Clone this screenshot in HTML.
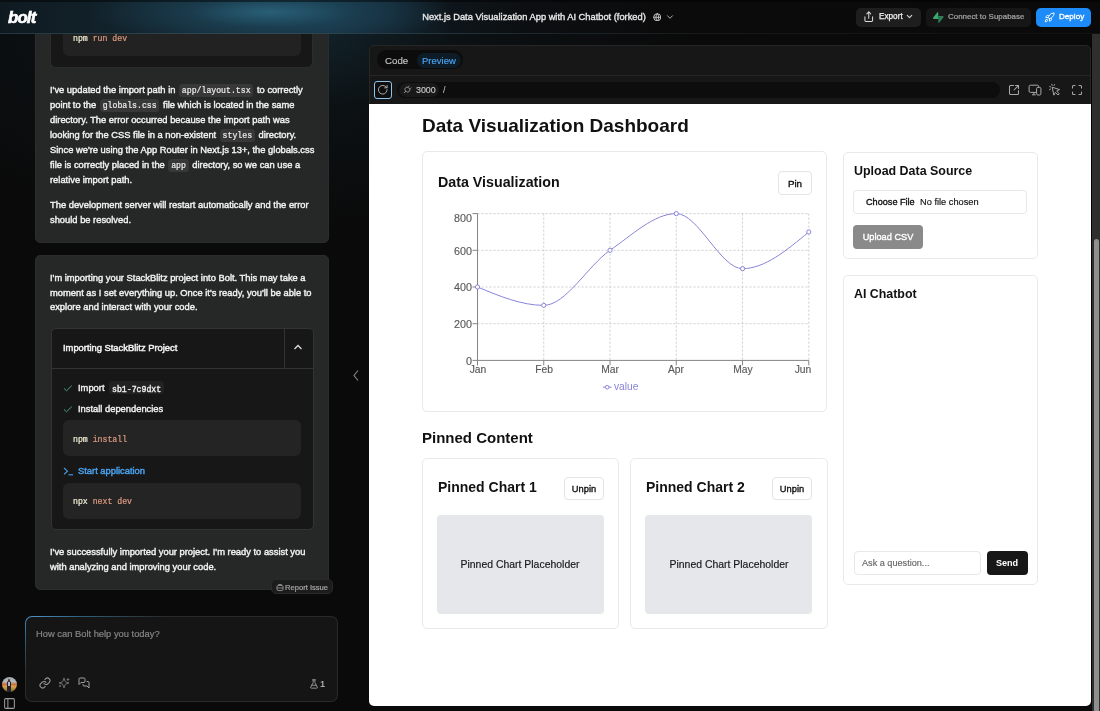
<!DOCTYPE html>
<html><head><meta charset="utf-8">
<style>
*{box-sizing:border-box;margin:0;padding:0}
html,body{width:1100px;height:711px;overflow:hidden;background:#0b0b0b;font-family:"Liberation Sans",sans-serif;position:relative}
.t{position:absolute;white-space:nowrap;will-change:transform}
.r{position:absolute}
.c{font-family:"Liberation Mono",monospace;font-size:8.2px;background:#383838;border-radius:3.5px;padding:2.3px 2.8px;color:#ececec;margin:0 1px;-webkit-text-stroke:0.2px currentColor}
</style></head><body>
<div class="r" style="left:0.00px;top:0.00px;width:1100.00px;height:711.00px;background:#0a0a0a"></div>
<div class="r" style="left:0.00px;top:0.00px;width:1100.00px;height:711.00px;background:radial-gradient(ellipse 420px 210px at 270px 20px, rgba(34,82,105,0.42) 0%, rgba(20,48,62,0.18) 45%, rgba(10,10,10,0) 100%)"></div>
<div class="r" style="left:35.00px;top:-20.00px;width:294.00px;height:262.50px;background:#262727;border:1px solid #2b2c2c;border-radius:5px"></div>
<div class="r" style="left:50.00px;top:-20.00px;width:263.00px;height:88.00px;background:#171717;border:1px solid #2c2c2c;border-radius:6px"></div>
<div class="r" style="left:63.00px;top:-20.00px;width:238.00px;height:75.50px;background:#222;border-radius:6px"></div>
<div class="t" style="left:73.30px;top:33.99px;font-size:8.2px;line-height:9.84px;color:#f0eed2;font-weight:normal;font-family:'Liberation Mono',monospace;-webkit-text-stroke:0.2px currentColor;">npm <span style="color:#dc9a80">run dev</span></div>
<div class="t" style="left:50.00px;top:84.75px;font-size:9.35px;line-height:11.22px;color:#f2f2f2;font-weight:normal;font-family:'Liberation Sans',sans-serif;-webkit-text-stroke:0.4px currentColor;">I've updated the import path in <span class="c">app/layout.tsx</span> to correctly</div>
<div class="t" style="left:50.00px;top:99.75px;font-size:9.35px;line-height:11.22px;color:#f2f2f2;font-weight:normal;font-family:'Liberation Sans',sans-serif;-webkit-text-stroke:0.4px currentColor;">point to the <span class="c">globals.css</span> file which is located in the same</div>
<div class="t" style="left:50.00px;top:114.75px;font-size:9.35px;line-height:11.22px;color:#f2f2f2;font-weight:normal;font-family:'Liberation Sans',sans-serif;-webkit-text-stroke:0.4px currentColor;">directory. The error occurred because the import path was</div>
<div class="t" style="left:50.00px;top:129.75px;font-size:9.35px;line-height:11.22px;color:#f2f2f2;font-weight:normal;font-family:'Liberation Sans',sans-serif;-webkit-text-stroke:0.4px currentColor;">looking for the CSS file in a non-existent <span class="c">styles</span> directory.</div>
<div class="t" style="left:50.00px;top:144.75px;font-size:9.35px;line-height:11.22px;color:#f2f2f2;font-weight:normal;font-family:'Liberation Sans',sans-serif;-webkit-text-stroke:0.4px currentColor;">Since we're using the App Router in Next.js 13+, the globals.css</div>
<div class="t" style="left:50.00px;top:159.75px;font-size:9.35px;line-height:11.22px;color:#f2f2f2;font-weight:normal;font-family:'Liberation Sans',sans-serif;-webkit-text-stroke:0.4px currentColor;">file is correctly placed in the <span class="c">app</span> directory, so we can use a</div>
<div class="t" style="left:50.00px;top:174.75px;font-size:9.35px;line-height:11.22px;color:#f2f2f2;font-weight:normal;font-family:'Liberation Sans',sans-serif;-webkit-text-stroke:0.4px currentColor;">relative import path.</div>
<div class="t" style="left:50.00px;top:200.15px;font-size:9.35px;line-height:11.22px;color:#f2f2f2;font-weight:normal;font-family:'Liberation Sans',sans-serif;-webkit-text-stroke:0.4px currentColor;">The development server will restart automatically and the error</div>
<div class="t" style="left:50.00px;top:215.15px;font-size:9.35px;line-height:11.22px;color:#f2f2f2;font-weight:normal;font-family:'Liberation Sans',sans-serif;-webkit-text-stroke:0.4px currentColor;">should be resolved.</div>
<div class="r" style="left:35.00px;top:254.70px;width:294.00px;height:335.00px;background:#262727;border:1px solid #2b2c2c;border-radius:5px"></div>
<div class="t" style="left:50.00px;top:272.55px;font-size:9.35px;line-height:11.22px;color:#f2f2f2;font-weight:normal;font-family:'Liberation Sans',sans-serif;-webkit-text-stroke:0.4px currentColor;">I'm importing your StackBlitz project into Bolt. This may take a</div>
<div class="t" style="left:50.00px;top:287.55px;font-size:9.35px;line-height:11.22px;color:#f2f2f2;font-weight:normal;font-family:'Liberation Sans',sans-serif;-webkit-text-stroke:0.4px currentColor;">moment as I set everything up. Once it's ready, you'll be able to</div>
<div class="t" style="left:50.00px;top:302.45px;font-size:9.35px;line-height:11.22px;color:#f2f2f2;font-weight:normal;font-family:'Liberation Sans',sans-serif;-webkit-text-stroke:0.4px currentColor;">explore and interact with your code.</div>
<div class="r" style="left:50.50px;top:328.40px;width:263.00px;height:202.10px;background:#171717;border:1px solid #333;border-radius:5px"></div>
<div class="r" style="left:51.50px;top:368.00px;width:261.00px;height:1.00px;background:#333"></div>
<div class="r" style="left:284.20px;top:329.40px;width:1.00px;height:38.60px;background:#333"></div>
<div class="t" style="left:63.00px;top:342.75px;font-size:9.35px;line-height:11.22px;color:#f4f4f4;font-weight:normal;font-family:'Liberation Sans',sans-serif;-webkit-text-stroke:0.45px currentColor;">Importing StackBlitz Project</div>
<svg class="r" style="left:293px;top:343px;" width="10" height="8" viewBox="0 0 10 8"><path d="M1.5 6 L5 2.5 L8.5 6" fill="none" stroke="#ddd" stroke-width="1.3"/></svg>
<svg class="r" style="left:63px;top:384px;" width="10" height="8" viewBox="0 0 10 8"><path d="M1 4.4 L3.5 6.8 L8.8 1.6" fill="none" stroke="#46a07a" stroke-width="1"/></svg>
<svg class="r" style="left:63px;top:405px;" width="10" height="8" viewBox="0 0 10 8"><path d="M1 4.4 L3.5 6.8 L8.8 1.6" fill="none" stroke="#46a07a" stroke-width="1"/></svg>
<div class="t" style="left:77.50px;top:382.95px;font-size:9.35px;line-height:11.22px;color:#f0f0f0;font-weight:normal;font-family:'Liberation Sans',sans-serif;-webkit-text-stroke:0.4px currentColor;">Import</div>
<div class="r" style="left:108.70px;top:381.30px;width:55.80px;height:13.20px;background:#222;border-radius:3px"></div>
<div class="t" style="left:112.30px;top:384.69px;font-size:8.2px;line-height:9.84px;color:#eeeeee;font-weight:normal;font-family:'Liberation Mono',monospace;-webkit-text-stroke:0.4px currentColor;">sb1-7c9dxt</div>
<div class="t" style="left:77.50px;top:404.25px;font-size:9.35px;line-height:11.22px;color:#f0f0f0;font-weight:normal;font-family:'Liberation Sans',sans-serif;-webkit-text-stroke:0.4px currentColor;">Install dependencies</div>
<div class="r" style="left:63.00px;top:420.00px;width:237.80px;height:36.20px;background:#242424;border-radius:6px"></div>
<div class="t" style="left:73.30px;top:434.69px;font-size:8.2px;line-height:9.84px;color:#f0eed2;font-weight:normal;font-family:'Liberation Mono',monospace;-webkit-text-stroke:0.2px currentColor;">npm <span style="color:#dc9a80">install</span></div>
<svg class="r" style="left:63px;top:467px;" width="11" height="9" viewBox="0 0 11 9"><path d="M1 1 L4.5 4.2 L1 7.4" fill="none" stroke="#4aa0e8" stroke-width="1.1"/><path d="M5.5 7.8 H10" stroke="#4aa0e8" stroke-width="1.1"/></svg>
<div class="t" style="left:78.00px;top:466.25px;font-size:9.35px;line-height:11.22px;color:#4aa3ef;font-weight:normal;font-family:'Liberation Sans',sans-serif;-webkit-text-stroke:0.4px currentColor;">Start application</div>
<div class="r" style="left:63.00px;top:482.50px;width:237.80px;height:36.20px;background:#242424;border-radius:6px"></div>
<div class="t" style="left:73.30px;top:497.19px;font-size:8.2px;line-height:9.84px;color:#f0eed2;font-weight:normal;font-family:'Liberation Mono',monospace;-webkit-text-stroke:0.2px currentColor;">npx <span style="color:#dc9a80">next dev</span></div>
<div class="t" style="left:50.00px;top:547.05px;font-size:9.35px;line-height:11.22px;color:#f2f2f2;font-weight:normal;font-family:'Liberation Sans',sans-serif;-webkit-text-stroke:0.4px currentColor;">I've successfully imported your project. I'm ready to assist you</div>
<div class="t" style="left:50.00px;top:561.95px;font-size:9.35px;line-height:11.22px;color:#f2f2f2;font-weight:normal;font-family:'Liberation Sans',sans-serif;-webkit-text-stroke:0.4px currentColor;">with analyzing and improving your code.</div>
<div class="r" style="left:271.00px;top:579.00px;width:62.00px;height:15.00px;background:#1c1c1c;border:1px solid #2a2a2a;border-radius:5px"></div>
<svg class="r" style="left:276px;top:583px;" width="8" height="8" viewBox="0 0 8 8"><rect x="1" y="2.5" width="6" height="5" rx="1.2" fill="none" stroke="#999" stroke-width="0.9"/><path d="M2.5 2.5 V1.5 H5.5 V2.5 M1 5 H7" fill="none" stroke="#999" stroke-width="0.8"/></svg>
<div class="t" style="left:285.00px;top:583.41px;font-size:7.6px;line-height:9.12px;color:#a8a8a8;font-weight:normal;font-family:'Liberation Sans',sans-serif;-webkit-text-stroke:0.2px currentColor;">Report Issue</div>
<div class="r" style="left:25.00px;top:616.40px;width:313.00px;height:85.60px;background:radial-gradient(ellipse 130px 60px at 8px 0px, #4a90c4 0%, #30607f 35%, #2a2a2a 100%);border-radius:7px"></div>
<div class="r" style="left:26.00px;top:617.40px;width:311.00px;height:83.60px;background:#151515;border-radius:6px"></div>
<div class="t" style="left:35.60px;top:629.15px;font-size:9.35px;line-height:11.22px;color:#858585;font-weight:normal;font-family:'Liberation Sans',sans-serif;-webkit-text-stroke:0.2px currentColor;">How can Bolt help you today?</div>
<svg class="r" style="left:38.5px;top:677px;" width="12" height="12" viewBox="0 0 24 24" fill="none" stroke="#9a9a9a" stroke-width="2.1" stroke-linecap="round" stroke-linejoin="round"><path d="M10 13a5 5 0 0 0 7.54.54l3-3a5 5 0 0 0-7.07-7.07l-1.72 1.71"/><path d="M14 11a5 5 0 0 0-7.54-.54l-3 3a5 5 0 0 0 7.07 7.07l1.71-1.71"/></svg>
<svg class="r" style="left:57.5px;top:677px;" width="12" height="12" viewBox="0 0 24 24" fill="none" stroke="#707070" stroke-width="2.0" stroke-linecap="round" stroke-linejoin="round"><path d="M9.937 15.5A2 2 0 0 0 8.5 14.063l-6.135-1.582a.5.5 0 0 1 0-.962L8.5 9.936A2 2 0 0 0 9.937 8.5l1.582-6.135a.5.5 0 0 1 .963 0L14.063 8.5A2 2 0 0 0 15.5 9.937l6.135 1.581a.5.5 0 0 1 0 .964L15.5 14.063a2 2 0 0 0-1.437 1.437l-1.582 6.135a.5.5 0 0 1-.963 0z"/><path d="M20 3v4"/><path d="M22 5h-4"/><path d="M4 17v2"/><path d="M5 18H3"/></svg>
<svg class="r" style="left:78px;top:677px;" width="12" height="12" viewBox="0 0 24 24" fill="none" stroke="#a0a0a0" stroke-width="2.0" stroke-linecap="round" stroke-linejoin="round"><path d="M14 9a2 2 0 0 1-2 2H6l-4 4V4a2 2 0 0 1 2-2h8a2 2 0 0 1 2 2z"/><path d="M18 9h2a2 2 0 0 1 2 2v11l-4-4h-6a2 2 0 0 1-2-2v-1"/></svg>
<svg class="r" style="left:309px;top:678.5px;" width="10" height="10" viewBox="0 0 24 24" fill="none" stroke="#999" stroke-width="2.2" stroke-linecap="round" stroke-linejoin="round"><path d="M14 2v6a2 2 0 0 0 .245.96l5.51 10.08A2 2 0 0 1 18 22H6a2 2 0 0 1-1.755-2.96l5.51-10.08A2 2 0 0 0 10 8V2"/><path d="M6.453 15h11.094"/><path d="M8.5 2h7"/></svg>
<div class="t" style="left:319.50px;top:679.25px;font-size:9.35px;line-height:11.22px;color:#bbbbbb;font-weight:normal;font-family:'Liberation Sans',sans-serif;-webkit-text-stroke:0.2px currentColor;">1</div>
<div class="r" style="left:1.5px;top:676.5px;width:15px;height:15px;border-radius:50%;overflow:hidden;background:linear-gradient(180deg,#9aa4ac 0%,#b8bcbe 30%,#c8703a 50%,#e0a050 62%,#b88a40 78%,#6a5a3a 100%);"><div style="position:absolute;left:5.5px;top:4.5px;width:4px;height:11px;background:#20222c;border-radius:1.5px 1.5px 0 0"></div><div style="position:absolute;left:6.6px;top:5.5px;width:1.8px;height:4px;background:#a8b8d8"></div><div style="position:absolute;left:6.2px;top:2.6px;width:2.6px;height:2.6px;background:#4a3a30;border-radius:50%"></div></div>
<svg class="r" style="left:2.5px;top:697px;" width="13" height="13" viewBox="0 0 24 24" fill="none" stroke="#9a9a9a" stroke-width="1.9" stroke-linecap="round" stroke-linejoin="round"><path d="M9 3v18"/><rect width="18" height="18" x="3" y="3" rx="2"/></svg>
<svg class="r" style="left:352px;top:369px;" width="8" height="13" viewBox="0 0 8 13"><path d="M6 1.5 L2 6.5 L6 11.5" fill="none" stroke="#888" stroke-width="1.1"/></svg>
<div class="r" style="left:0.00px;top:0.00px;width:1100.00px;height:33.00px;background:radial-gradient(ellipse 180px 34px at 270px 12px, rgba(44,104,130,0.85) 0%, rgba(32,78,100,0.5) 45%, rgba(20,40,52,0) 100%), linear-gradient(90deg,#0f1a20 0%,#142833 18%,#173141 30%,#132632 36%,#0e151a 41%,#0c0f11 48%,#0b0b0c 60%,#0a0a0a 100%)"></div>
<div class="r" style="left:0.00px;top:0.00px;width:1100.00px;height:1.50px;background:rgba(0,0,0,0.45)"></div>
<div class="r" style="left:0.00px;top:33.00px;width:1100.00px;height:1.00px;background:linear-gradient(90deg,#25353d,#2f4a57 25%,#1c262b 50%,#161616 70%,#121212)"></div>
<div class="t" style="left:7.60px;top:8.06px;font-size:16px;line-height:19.20px;color:#ffffff;font-weight:bold;font-family:'Liberation Sans',sans-serif;font-style:italic;letter-spacing:-0.8px;transform:scaleX(1.05);transform-origin:left;-webkit-text-stroke:0.6px #fff;">bolt</div>
<div class="t" style="left:233.50px;width:600px;text-align:center;top:12.30px;font-size:9.3px;line-height:11.16px;color:#e8e8e8;font-weight:normal;font-family:'Liberation Sans',sans-serif;-webkit-text-stroke:0.35px currentColor;">Next.js Data Visualization App with AI Chatbot (forked)</div>
<svg class="r" style="left:652.8px;top:12.8px;" width="8.6" height="8.6" viewBox="0 0 24 24" fill="none" stroke="#c8c8c8" stroke-width="2.6" stroke-linecap="round" stroke-linejoin="round"><circle cx="12" cy="12" r="10"/><path d="M12 2a14.5 14.5 0 0 0 0 20 14.5 14.5 0 0 0 0-20"/><path d="M2 12h20"/></svg>
<svg class="r" style="left:665px;top:12px;" width="10" height="10" viewBox="0 0 24 24" fill="none" stroke="#bbb" stroke-width="2.2" stroke-linecap="round" stroke-linejoin="round"><path d="m6 9 6 6 6-6"/></svg>
<div class="r" style="left:856.00px;top:8.00px;width:65.00px;height:18.60px;background:#1e1e1e;border-radius:5px"></div>
<svg class="r" style="left:862.5px;top:11px;" width="11.5" height="11.5" viewBox="0 0 24 24" fill="none" stroke="#ddd" stroke-width="2.1" stroke-linecap="round" stroke-linejoin="round"><path d="M4 12v8a2 2 0 0 0 2 2h12a2 2 0 0 0 2-2v-8"/><path d="M16 6 12 2 8 6"/><path d="M12 2v13"/></svg>
<div class="t" style="left:879.00px;top:12.24px;font-size:8.2px;line-height:9.84px;color:#f0f0f0;font-weight:normal;font-family:'Liberation Sans',sans-serif;-webkit-text-stroke:0.25px currentColor;">Export</div>
<svg class="r" style="left:904.5px;top:12.3px;" width="9" height="9" viewBox="0 0 24 24" fill="none" stroke="#ddd" stroke-width="2.8" stroke-linecap="round" stroke-linejoin="round"><path d="m6 9 6 6 6-6"/></svg>
<div class="r" style="left:926.00px;top:8.00px;width:104.70px;height:18.60px;background:#161616;border-radius:5px"></div>
<svg class="r" style="left:933px;top:11.5px" width="11" height="11" viewBox="0 0 24 24"><path d="M13.53 23.42C12.92 24.19 11.69 23.77 11.68 22.79L11.45 8.51H21.06C22.8 8.51 23.77 10.52 22.69 11.88Z" fill="#2a7d55"/><path d="M9.63 .44C10.24 -.33 11.47 .09 11.48 1.07L11.57 15.35H2.09C.35 15.35 -.62 13.34 .46 11.98Z" fill="#3da673"/></svg>
<div class="t" style="left:947.70px;top:12.38px;font-size:7.95px;line-height:9.54px;color:#a8a8a8;font-weight:normal;font-family:'Liberation Sans',sans-serif;-webkit-text-stroke:0.2px currentColor;">Connect to Supabase</div>
<div class="r" style="left:1036.00px;top:8.00px;width:55.40px;height:18.60px;background:#1d8cf8;border-radius:5px"></div>
<svg class="r" style="left:1043.5px;top:11.5px;" width="11" height="11" viewBox="0 0 24 24" fill="none" stroke="#fff" stroke-width="2.0" stroke-linecap="round" stroke-linejoin="round"><path d="M4.5 16.5c-1.5 1.26-2 5-2 5s3.74-.5 5-2c.71-.84.7-2.13-.09-2.91a2.18 2.18 0 0 0-2.91-.09z"/><path d="m12 15-3-3a22 22 0 0 1 2-3.95A12.88 12.88 0 0 1 22 2c0 2.72-.78 7.5-6 11a22.35 22.35 0 0 1-4 2z"/><path d="M9 12H4s.55-3.03 2-4c1.62-1.08 5 0 5 0"/><path d="M12 15v5s3.03-.55 4-2c1.08-1.62 0-5 0-5"/></svg>
<div class="t" style="left:1059.00px;top:12.33px;font-size:8.1px;line-height:9.72px;color:#ffffff;font-weight:normal;font-family:'Liberation Sans',sans-serif;-webkit-text-stroke:0.3px currentColor;">Deploy</div>
<div class="r" style="left:369.00px;top:44.60px;width:722.00px;height:661.40px;background:#171717;border:1px solid #262626;border-radius:5px;"></div>
<div class="r" style="left:370.00px;top:74.50px;width:720.00px;height:1.00px;background:#262626"></div>
<div class="r" style="left:377.00px;top:50.20px;width:86.00px;height:19.20px;background:#0c0c0c;border-radius:10px"></div>
<div class="r" style="left:416.50px;top:53.00px;width:44.50px;height:14.50px;background:#0e1c27;border-radius:8px"></div>
<div class="t" style="left:385.30px;top:54.72px;font-size:9.7px;line-height:11.64px;color:#c4c4c4;font-weight:normal;font-family:'Liberation Sans',sans-serif;-webkit-text-stroke:0.15px currentColor;">Code</div>
<div class="t" style="left:422.30px;top:54.91px;font-size:9.5px;line-height:11.40px;color:#4aa3f0;font-weight:normal;font-family:'Liberation Sans',sans-serif;-webkit-text-stroke:0.15px currentColor;">Preview</div>
<div class="r" style="left:373.50px;top:80.60px;width:18.50px;height:18.20px;background:#0e0e0e;border:1.2px solid #8cc4ee;border-radius:3px"></div>
<svg class="r" style="left:377px;top:83.5px;" width="11.5" height="11.5" viewBox="0 0 24 24" fill="none" stroke="#b8b8b8" stroke-width="1.9" stroke-linecap="round" stroke-linejoin="round"><path d="M21 12a9 9 0 1 1-9-9c2.52 0 4.93 1 6.74 2.74L21 8"/><path d="M21 3v5h-5"/></svg>
<div class="r" style="left:397.00px;top:81.70px;width:603.00px;height:16.80px;background:#0d0d0d;border-radius:8px"></div>
<div class="r" style="left:398.50px;top:83.00px;width:40.50px;height:14.30px;background:#191919;border-radius:7px"></div>
<svg class="r" style="left:402px;top:84px;" width="11" height="11" viewBox="0 0 11 11"><g transform="rotate(45 5.5 5.5)"><rect x="3" y="3.6" width="5" height="4" rx="1.6" fill="none" stroke="#9a9a9a" stroke-width="0.9"/><path d="M4.3 3.6 V1.6 M6.7 3.6 V1.6 M5.5 7.6 V10.5" stroke="#9a9a9a" stroke-width="0.9"/></g></svg>
<div class="t" style="left:415.80px;top:85.08px;font-size:8.9px;line-height:10.68px;color:#c8c8c8;font-weight:normal;font-family:'Liberation Sans',sans-serif;-webkit-text-stroke:0.15px currentColor;">3000</div>
<div class="t" style="left:443.00px;top:85.28px;font-size:9px;line-height:10.80px;color:#c8c8c8;font-weight:normal;font-family:'Liberation Sans',sans-serif;">/</div>
<svg class="r" style="left:1007.5px;top:83.5px;" width="12" height="12" viewBox="0 0 24 24" fill="none" stroke="#a8a8a8" stroke-width="2.1" stroke-linecap="round" stroke-linejoin="round"><path d="M21 13v6a2 2 0 0 1-2 2H5a2 2 0 0 1-2-2V5a2 2 0 0 1 2-2h6"/><path d="m21 3-9 9"/><path d="M15 3h6v6"/></svg>
<svg class="r" style="left:1028px;top:84px;" width="14" height="12" viewBox="0 0 14 12"><rect x="1.1" y="1.2" width="9.6" height="7.2" rx="1.3" fill="none" stroke="#a8a8a8" stroke-width="1"/><path d="M5.9 8.4 V10.6 M4 10.8 H7.6" stroke="#a8a8a8" stroke-width="1"/><rect x="8.6" y="3.4" width="4.3" height="7.6" rx="1.2" fill="#171717" stroke="#a8a8a8" stroke-width="1"/></svg>
<svg class="r" style="left:1048px;top:83px;" width="14" height="13" viewBox="0 0 14 13"><path d="M4.2 4.2 L5.9 12.2 L7.4 9.4 L10 12 L11.3 10.7 L8.7 8.1 L11.6 6.6 Z" fill="none" stroke="#a8a8a8" stroke-width="1" stroke-linejoin="round"/><path d="M1.6 3.6 L2.8 4 M3.8 1.2 L4.1 2.5 M6.6 1.4 L6 2.5 M1.4 6.7 L2.6 6" stroke="#a8a8a8" stroke-width="0.9" stroke-linecap="round"/></svg>
<svg class="r" style="left:1071px;top:84px;" width="12" height="12" viewBox="0 0 24 24" fill="none" stroke="#a8a8a8" stroke-width="2.1" stroke-linecap="round" stroke-linejoin="round"><path d="M8 3H5a2 2 0 0 0-2 2v3"/><path d="M21 8V5a2 2 0 0 0-2-2h-3"/><path d="M3 16v3a2 2 0 0 0 2 2h3"/><path d="M16 21h3a2 2 0 0 0 2-2v-3"/></svg>
<div class="r" style="left:369.00px;top:103.70px;width:722.00px;height:602.30px;background:#ffffff;border-radius:0 0 5px 5px"></div>
<div class="r" style="left:1091.00px;top:34.00px;width:1.00px;height:677.00px;background:#050505"></div>
<div class="r" style="left:1092.00px;top:34.00px;width:8.00px;height:677.00px;background:#2f2f2f"></div>
<div class="r" style="left:1093.70px;top:239.40px;width:5.70px;height:480.60px;background:#8f8f8f;border-radius:3px"></div>
<div class="t" style="left:421.80px;top:114.92px;font-size:19px;line-height:22.80px;color:#111111;font-weight:bold;font-family:'Liberation Sans',sans-serif;">Data Visualization Dashboard</div>
<div class="r" style="left:421.80px;top:151.40px;width:405.50px;height:260.70px;background:#fff;border:1px solid #e9e9e9;border-radius:5px;"></div>
<div class="t" style="left:437.70px;top:173.81px;font-size:14.25px;line-height:17.10px;color:#111;font-weight:bold;font-family:'Liberation Sans',sans-serif;">Data Visualization</div>
<div class="r" style="left:778.40px;top:171.40px;width:34.10px;height:23.80px;background:#fff;border:1px solid #e5e5e5;border-radius:4px"></div>
<div class="t" style="left:495.45px;width:600px;text-align:center;top:178.22px;font-size:9.8px;line-height:11.76px;color:#111;font-weight:normal;font-family:'Liberation Sans',sans-serif;-webkit-text-stroke:0.35px currentColor;">Pin</div>
<svg class="r" style="left:0;top:0" width="1100" height="711"><line x1="543.76" y1="213.6" x2="543.76" y2="360.4" stroke="#cdcdcd" stroke-width="1" stroke-dasharray="2 2"/><line x1="610.02" y1="213.6" x2="610.02" y2="360.4" stroke="#cdcdcd" stroke-width="1" stroke-dasharray="2 2"/><line x1="676.28" y1="213.6" x2="676.28" y2="360.4" stroke="#cdcdcd" stroke-width="1" stroke-dasharray="2 2"/><line x1="742.54" y1="213.6" x2="742.54" y2="360.4" stroke="#cdcdcd" stroke-width="1" stroke-dasharray="2 2"/><line x1="808.80" y1="213.6" x2="808.80" y2="360.4" stroke="#cdcdcd" stroke-width="1" stroke-dasharray="2 2"/><line x1="477.5" y1="323.70" x2="808.80" y2="323.70" stroke="#cdcdcd" stroke-width="1" stroke-dasharray="2 2"/><line x1="477.5" y1="287.00" x2="808.80" y2="287.00" stroke="#cdcdcd" stroke-width="1" stroke-dasharray="2 2"/><line x1="477.5" y1="250.30" x2="808.80" y2="250.30" stroke="#cdcdcd" stroke-width="1" stroke-dasharray="2 2"/><line x1="477.5" y1="213.60" x2="808.80" y2="213.60" stroke="#cdcdcd" stroke-width="1" stroke-dasharray="2 2"/><line x1="477.5" y1="213.6" x2="477.5" y2="360.4" stroke="#858585" stroke-width="1"/><line x1="477.5" y1="360.4" x2="808.80" y2="360.4" stroke="#858585" stroke-width="1"/><line x1="472.5" y1="360.40" x2="477.5" y2="360.40" stroke="#858585" stroke-width="1"/><line x1="472.5" y1="323.70" x2="477.5" y2="323.70" stroke="#858585" stroke-width="1"/><line x1="472.5" y1="287.00" x2="477.5" y2="287.00" stroke="#858585" stroke-width="1"/><line x1="472.5" y1="250.30" x2="477.5" y2="250.30" stroke="#858585" stroke-width="1"/><line x1="472.5" y1="213.60" x2="477.5" y2="213.60" stroke="#858585" stroke-width="1"/><line x1="477.50" y1="360.4" x2="477.50" y2="365.4" stroke="#858585" stroke-width="1"/><line x1="543.76" y1="360.4" x2="543.76" y2="365.4" stroke="#858585" stroke-width="1"/><line x1="610.02" y1="360.4" x2="610.02" y2="365.4" stroke="#858585" stroke-width="1"/><line x1="676.28" y1="360.4" x2="676.28" y2="365.4" stroke="#858585" stroke-width="1"/><line x1="742.54" y1="360.4" x2="742.54" y2="365.4" stroke="#858585" stroke-width="1"/><line x1="808.80" y1="360.4" x2="808.80" y2="365.4" stroke="#858585" stroke-width="1"/><path d="M477.50,287.00 C499.59,296.17 521.67,305.35 543.76,305.35 C565.85,305.35 587.93,265.59 610.02,250.30 C632.11,235.01 654.19,213.60 676.28,213.60 C698.37,213.60 720.45,268.65 742.54,268.65 C764.63,268.65 786.71,250.30 808.80,231.95" fill="none" stroke="#8884d8" stroke-width="1"/><circle cx="477.50" cy="287.00" r="2.1" fill="#fff" stroke="#8884d8" stroke-width="1"/><circle cx="543.76" cy="305.35" r="2.1" fill="#fff" stroke="#8884d8" stroke-width="1"/><circle cx="610.02" cy="250.30" r="2.1" fill="#fff" stroke="#8884d8" stroke-width="1"/><circle cx="676.28" cy="213.60" r="2.1" fill="#fff" stroke="#8884d8" stroke-width="1"/><circle cx="742.54" cy="268.65" r="2.1" fill="#fff" stroke="#8884d8" stroke-width="1"/><circle cx="808.80" cy="231.95" r="2.1" fill="#fff" stroke="#8884d8" stroke-width="1"/><line x1="603" y1="387.2" x2="611.5" y2="387.2" stroke="#8884d8" stroke-width="1"/><circle cx="607.2" cy="387.2" r="1.8" fill="#fff" stroke="#8884d8" stroke-width="1"/></svg>
<div class="t" style="right:627.90px;text-align:right;top:354.63px;font-size:10.75px;line-height:12.90px;color:#5a5a5a;font-weight:normal;font-family:'Liberation Sans',sans-serif;-webkit-text-stroke:0.15px currentColor;">0</div>
<div class="t" style="right:627.90px;text-align:right;top:317.93px;font-size:10.75px;line-height:12.90px;color:#5a5a5a;font-weight:normal;font-family:'Liberation Sans',sans-serif;-webkit-text-stroke:0.15px currentColor;">200</div>
<div class="t" style="right:627.90px;text-align:right;top:281.23px;font-size:10.75px;line-height:12.90px;color:#5a5a5a;font-weight:normal;font-family:'Liberation Sans',sans-serif;-webkit-text-stroke:0.15px currentColor;">400</div>
<div class="t" style="right:627.90px;text-align:right;top:244.53px;font-size:10.75px;line-height:12.90px;color:#5a5a5a;font-weight:normal;font-family:'Liberation Sans',sans-serif;-webkit-text-stroke:0.15px currentColor;">600</div>
<div class="t" style="right:627.90px;text-align:right;top:212.13px;font-size:10.75px;line-height:12.90px;color:#5a5a5a;font-weight:normal;font-family:'Liberation Sans',sans-serif;-webkit-text-stroke:0.15px currentColor;">800</div>
<div class="t" style="left:177.50px;width:600px;text-align:center;top:363.85px;font-size:10.3px;line-height:12.36px;color:#5a5a5a;font-weight:normal;font-family:'Liberation Sans',sans-serif;-webkit-text-stroke:0.15px currentColor;">Jan</div>
<div class="t" style="left:243.76px;width:600px;text-align:center;top:363.85px;font-size:10.3px;line-height:12.36px;color:#5a5a5a;font-weight:normal;font-family:'Liberation Sans',sans-serif;-webkit-text-stroke:0.15px currentColor;">Feb</div>
<div class="t" style="left:310.02px;width:600px;text-align:center;top:363.85px;font-size:10.3px;line-height:12.36px;color:#5a5a5a;font-weight:normal;font-family:'Liberation Sans',sans-serif;-webkit-text-stroke:0.15px currentColor;">Mar</div>
<div class="t" style="left:376.28px;width:600px;text-align:center;top:363.85px;font-size:10.3px;line-height:12.36px;color:#5a5a5a;font-weight:normal;font-family:'Liberation Sans',sans-serif;-webkit-text-stroke:0.15px currentColor;">Apr</div>
<div class="t" style="left:442.54px;width:600px;text-align:center;top:363.85px;font-size:10.3px;line-height:12.36px;color:#5a5a5a;font-weight:normal;font-family:'Liberation Sans',sans-serif;-webkit-text-stroke:0.15px currentColor;">May</div>
<div class="t" style="left:503.40px;width:600px;text-align:center;top:363.85px;font-size:10.3px;line-height:12.36px;color:#5a5a5a;font-weight:normal;font-family:'Liberation Sans',sans-serif;-webkit-text-stroke:0.15px currentColor;">Jun</div>
<div class="t" style="left:614.00px;top:381.25px;font-size:10.2px;line-height:12.24px;color:#8884d8;font-weight:normal;font-family:'Liberation Sans',sans-serif;">value</div>
<div class="r" style="left:843.40px;top:151.50px;width:194.90px;height:107.50px;background:#fff;border:1px solid #e9e9e9;border-radius:5px;"></div>
<div class="t" style="left:854.00px;top:164.02px;font-size:12.45px;line-height:14.94px;color:#111;font-weight:bold;font-family:'Liberation Sans',sans-serif;">Upload Data Source</div>
<div class="r" style="left:853.40px;top:189.70px;width:174.10px;height:24.60px;background:#fff;border:1px solid #e8e8e8;border-radius:4px"></div>
<div class="t" style="left:865.50px;top:196.94px;font-size:9.15px;line-height:10.98px;color:#111;font-weight:normal;font-family:'Liberation Sans',sans-serif;-webkit-text-stroke:0.35px currentColor;">Choose File</div>
<div class="t" style="left:920.40px;top:196.84px;font-size:9.25px;line-height:11.10px;color:#111;font-weight:normal;font-family:'Liberation Sans',sans-serif;-webkit-text-stroke:0.15px currentColor;">No file chosen</div>
<div class="r" style="left:853.40px;top:224.70px;width:69.80px;height:24.00px;background:#8a8a8a;border-radius:4px"></div>
<div class="t" style="left:588.30px;width:600px;text-align:center;top:232.19px;font-size:9.2px;line-height:11.04px;color:#ffffff;font-weight:normal;font-family:'Liberation Sans',sans-serif;-webkit-text-stroke:0.35px currentColor;">Upload CSV</div>
<div class="r" style="left:843.40px;top:275.20px;width:194.90px;height:310.10px;background:#fff;border:1px solid #e9e9e9;border-radius:5px;"></div>
<div class="t" style="left:854.00px;top:287.36px;font-size:12.4px;line-height:14.88px;color:#111;font-weight:bold;font-family:'Liberation Sans',sans-serif;">AI Chatbot</div>
<div class="r" style="left:853.60px;top:550.50px;width:127.90px;height:24.80px;background:#fff;border:1px solid #e8e8e8;border-radius:4px"></div>
<div class="t" style="left:861.80px;top:558.24px;font-size:9.15px;line-height:10.98px;color:#666;font-weight:normal;font-family:'Liberation Sans',sans-serif;-webkit-text-stroke:0.15px currentColor;">Ask a question...</div>
<div class="r" style="left:986.70px;top:550.90px;width:41.00px;height:24.40px;background:#171717;border-radius:4px"></div>
<div class="t" style="left:707.30px;width:600px;text-align:center;top:558.19px;font-size:9.1px;line-height:10.92px;color:#fff;font-weight:bold;font-family:'Liberation Sans',sans-serif;">Send</div>
<div class="t" style="left:421.80px;top:429.40px;font-size:15px;line-height:18.00px;color:#111;font-weight:bold;font-family:'Liberation Sans',sans-serif;">Pinned Content</div>
<div class="r" style="left:421.50px;top:458.00px;width:197.80px;height:171.00px;background:#fff;border:1px solid #e9e9e9;border-radius:5px;"></div>
<div class="t" style="left:437.50px;top:479.25px;font-size:14px;line-height:16.80px;color:#111;font-weight:bold;font-family:'Liberation Sans',sans-serif;">Pinned Chart 1</div>
<div class="r" style="left:563.60px;top:477.20px;width:40.00px;height:22.50px;background:#fff;border:1px solid #e5e5e5;border-radius:4px"></div>
<div class="t" style="left:283.60px;width:600px;text-align:center;top:483.70px;font-size:9.3px;line-height:11.16px;color:#111;font-weight:normal;font-family:'Liberation Sans',sans-serif;-webkit-text-stroke:0.35px currentColor;">Unpin</div>
<div class="r" style="left:436.80px;top:514.50px;width:166.90px;height:99.30px;background:#e5e7eb;border-radius:4px"></div>
<div class="t" style="left:220.25px;width:600px;text-align:center;top:558.71px;font-size:10.45px;line-height:12.54px;color:#151515;font-weight:normal;font-family:'Liberation Sans',sans-serif;-webkit-text-stroke:0.15px currentColor;">Pinned Chart Placeholder</div>
<div class="r" style="left:629.60px;top:458.00px;width:198.20px;height:171.00px;background:#fff;border:1px solid #e9e9e9;border-radius:5px;"></div>
<div class="t" style="left:646.00px;top:479.25px;font-size:14px;line-height:16.80px;color:#111;font-weight:bold;font-family:'Liberation Sans',sans-serif;">Pinned Chart 2</div>
<div class="r" style="left:772.00px;top:477.20px;width:40.00px;height:22.50px;background:#fff;border:1px solid #e5e5e5;border-radius:4px"></div>
<div class="t" style="left:492.00px;width:600px;text-align:center;top:483.70px;font-size:9.3px;line-height:11.16px;color:#111;font-weight:normal;font-family:'Liberation Sans',sans-serif;-webkit-text-stroke:0.35px currentColor;">Unpin</div>
<div class="r" style="left:645.30px;top:514.50px;width:166.80px;height:99.30px;background:#e5e7eb;border-radius:4px"></div>
<div class="t" style="left:428.70px;width:600px;text-align:center;top:558.71px;font-size:10.45px;line-height:12.54px;color:#151515;font-weight:normal;font-family:'Liberation Sans',sans-serif;-webkit-text-stroke:0.15px currentColor;">Pinned Chart Placeholder</div>
</body></html>
